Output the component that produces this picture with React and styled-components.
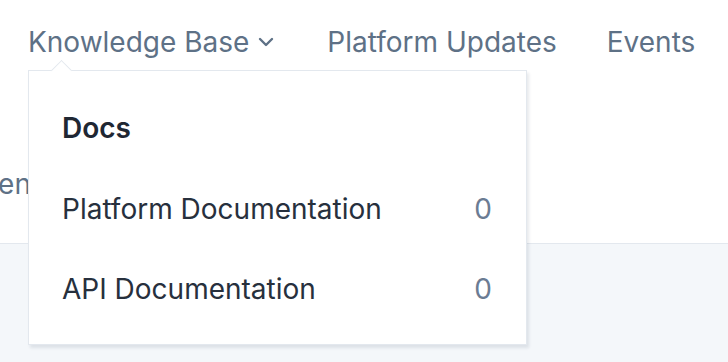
import styled, { createGlobalStyle } from "styled-components";

const GlobalStyle = createGlobalStyle`
  html, body {
    margin: 0;
    padding: 0;
    background: #f4f7fa;
  }
  body {
    font-family: Inter, "Noto Sans", sans-serif;
    -webkit-font-smoothing: antialiased;
  }
`;

const Page = styled.div`
  position: relative;
  width: 728px;
  height: 362px;
  overflow: hidden;
`;

const Header = styled.header`
  background: #fff;
  height: 244px;
  border-bottom: 1px solid #e3e8ee;
  box-sizing: border-box;
`;

const Nav = styled.nav`
  display: flex;
  align-items: center;
  height: 84px;
  padding-left: 28px;
`;

const NavItem = styled.a`
  display: flex;
  align-items: center;
  gap: 9px;
  margin-right: ${(p) => p.$gap}px;
  font-size: 28px;
  color: #5e7186;
  text-decoration: none;
  white-space: nowrap;
`;

const SubRow = styled.div`
  display: flex;
  align-items: center;
  height: 80px;
  margin-top: 60px;
  white-space: nowrap;
`;

const SubLink = styled.span`
  font-size: 28px;
  color: #5e7186;
  margin-left: -96px;
`;

const Dropdown = styled.div`
  position: absolute;
  left: 28px;
  top: 70px;
  width: 499px;
  box-sizing: border-box;
  background: #fff;
  border: 1px solid #e3e8ee;
  box-shadow: 2px 3px 3px rgba(20, 40, 70, 0.1);
  padding: 33px 34px 15px 33px;

  &::before {
    content: "";
    position: absolute;
    left: 25px;
    top: -8px;
    width: 14px;
    height: 14px;
    background: #fff;
    border-left: 1px solid #e3e8ee;
    border-top: 1px solid #e3e8ee;
    transform: rotate(45deg);
  }
`;

const GroupTitle = styled.h3`
  margin: 0 0 17px;
  font-size: 28px;
  font-weight: 600;
  color: #1f2733;
  line-height: 48px;
`;

const Row = styled.a`
  display: flex;
  justify-content: space-between;
  align-items: center;
  height: 80px;
  font-size: 28px;
  color: #27303d;
  text-decoration: none;
`;

const Count = styled.span`
  color: #6b7c93;
`;

const Chevron = () => (
  <svg width="16" height="10" viewBox="0 0 16 10" fill="none">
    <path d="M2 2l6 6 6-6" stroke="#5e7186" strokeWidth="2.4" strokeLinecap="round" strokeLinejoin="round" />
  </svg>
);

const docs = [
  { name: "Platform Documentation", count: 0 },
  { name: "API Documentation", count: 0 },
];

const App = () => {
  return (
    <Page>
      <GlobalStyle />
      <Header>
        <Nav>
          <NavItem $gap={53}>
            Knowledge Base <Chevron />
          </NavItem>
          <NavItem $gap={50}>Platform Updates</NavItem>
          <NavItem $gap={0}>Events</NavItem>
        </Nav>
        <SubRow>
          <SubLink>Documentation</SubLink>
        </SubRow>
      </Header>
      <Dropdown>
        <GroupTitle>Docs</GroupTitle>
        {docs.map((d) => (
          <Row key={d.name}>
            {d.name}
            <Count>{d.count}</Count>
          </Row>
        ))}
      </Dropdown>
    </Page>
  );
};

export default App;
